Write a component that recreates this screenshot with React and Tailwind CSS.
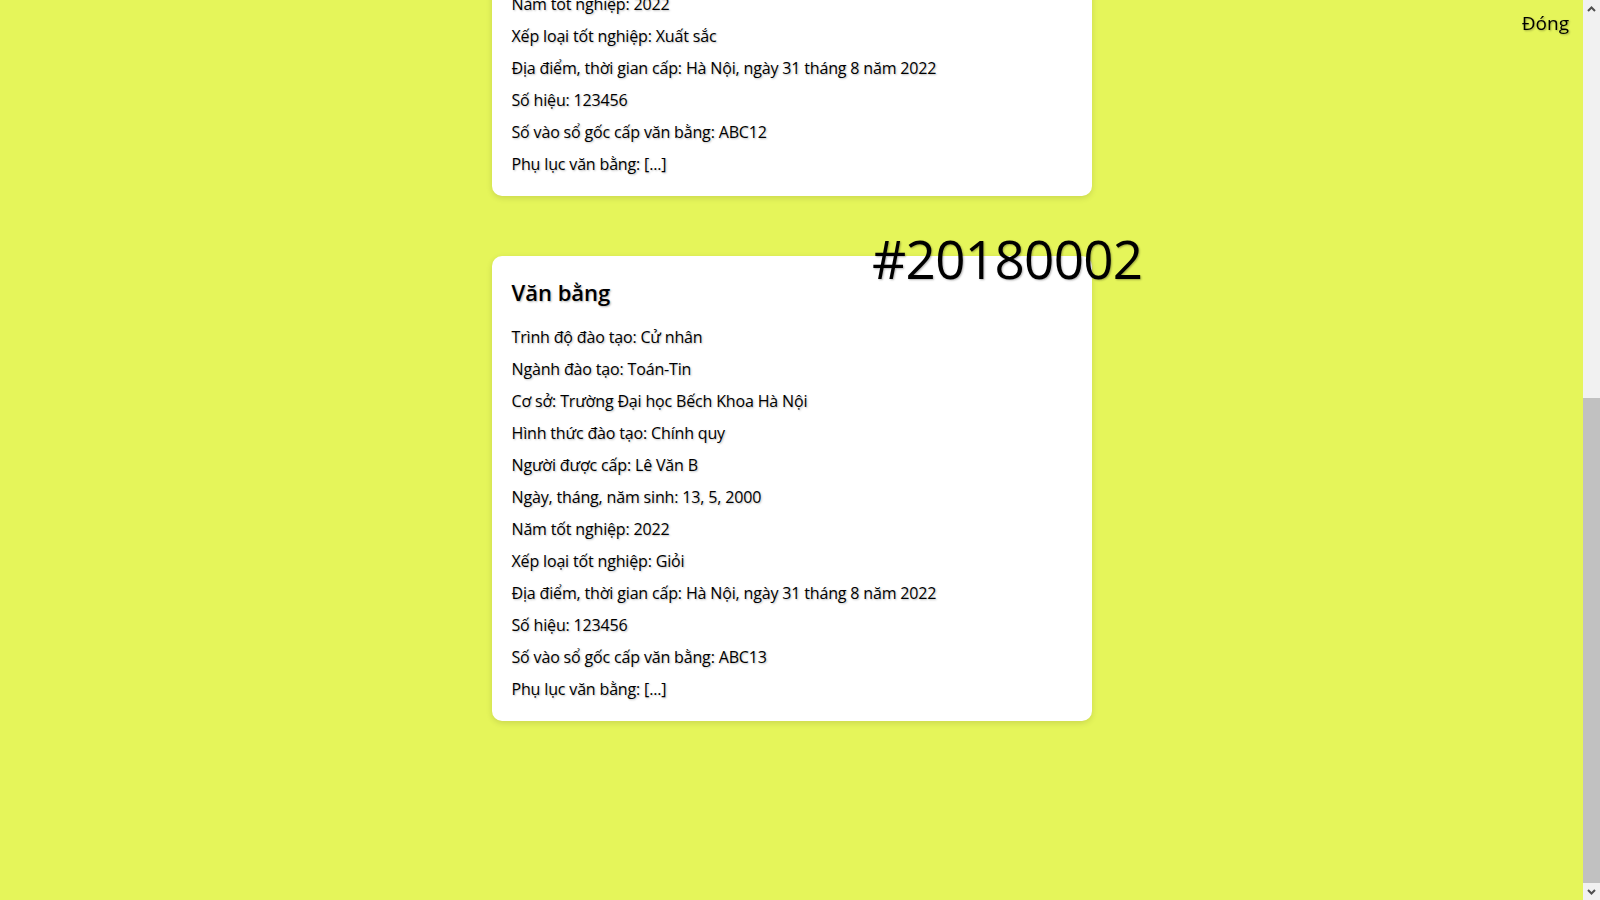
import React, { useLayoutEffect } from 'react';

const diplomas = [
    {
        id: '#20180001',
        name: 'Lê Văn A',
        dob: '12, 3, 2000',
        rank: 'Xuất sắc',
        book: 'ABC12',
    },
    {
        id: '#20180002',
        name: 'Lê Văn B',
        dob: '13, 5, 2000',
        rank: 'Giỏi',
        book: 'ABC13',
    },
];

function DiplomaCard({ d }) {
    const rows = [
        'Trình độ đào tạo: Cử nhân',
        'Ngành đào tạo: Toán-Tin',
        'Cơ sở: Trường Đại học Bếch Khoa Hà Nội',
        'Hình thức đào tạo: Chính quy',
        `Người được cấp: ${d.name}`,
        `Ngày, tháng, năm sinh: ${d.dob}`,
        'Năm tốt nghiệp: 2022',
        `Xếp loại tốt nghiệp: ${d.rank}`,
        'Địa điểm, thời gian cấp: Hà Nội, ngày 31 tháng 8 năm 2022',
        'Số hiệu: 123456',
        `Số vào sổ gốc cấp văn bằng: ${d.book}`,
        'Phụ lục văn bằng: [...]',
    ];

    return (
        <div className="relative bg-white rounded-[10px] p-5 shadow-[0_2px_6px_rgba(0,0,0,0.12)]">
            {/* Diploma number sits over the top-right corner */}
            <span className="absolute top-[-24px] right-[-51px] text-[53px] leading-none tracking-[-0.013em] text-black [text-shadow:1px_1px_2px_rgba(0,0,0,0.3)]">
                {d.id}
            </span>
            <h2 className="text-[22px] leading-[33px] font-semibold text-black [text-shadow:1px_1px_2px_rgba(0,0,0,0.3)]">Văn bằng</h2>
            <div className="mt-4 flex flex-col gap-2">
                {rows.map((r) => (
                    <p key={r} className="text-base leading-6 tracking-[-0.01em] text-black [text-shadow:1px_1px_2px_rgba(0,0,0,0.25)]">{r}</p>
                ))}
            </div>
        </div>
    );
}

function Chevron({ up }) {
    return (
        <svg width="9" height="6" viewBox="0 0 9 6">
            <path d={up ? 'M1 5 L4.5 1.5 L8 5' : 'M1 1 L4.5 4.5 L8 1'} fill="none" stroke="#505050" strokeWidth="2" />
        </svg>
    );
}

// page scrollbar, drawn since the headless window hides the real one
function Scrollbar() {
    return (
        <div className="fixed top-0 right-0 w-[17px] h-screen bg-[#f1f1f1] flex flex-col">
            <div className="h-[17px] flex items-center justify-center"><Chevron up /></div>
            <div className="flex-1 flex flex-col">
                <div className="flex-1" />
                <div className="h-[485px] bg-[#c1c1c1]" />
            </div>
            <div className="h-[17px] flex items-center justify-center"><Chevron /></div>
        </div>
    );
}

export default function App() {
    // page is shown scrolled down to the last diploma
    useLayoutEffect(() => {
        window.scrollTo(0, document.documentElement.scrollHeight);
    }, []);

    return (
        <div className="min-h-screen bg-[#e5f55a] font-['Open_Sans',sans-serif] text-black pr-[17px]">
            <button className="fixed top-[9px] right-[31px] text-[19px] leading-[28px] text-black [text-shadow:1px_1px_2px_rgba(0,0,0,0.3)]">
                Đóng
            </button>

            <div className="w-[600px] mx-auto pt-[439px] pb-[179px] flex flex-col gap-[60px]">
                {diplomas.map((d) => (
                    <DiplomaCard key={d.id} d={d} />
                ))}
            </div>

            <Scrollbar />
        </div>
    );
}
